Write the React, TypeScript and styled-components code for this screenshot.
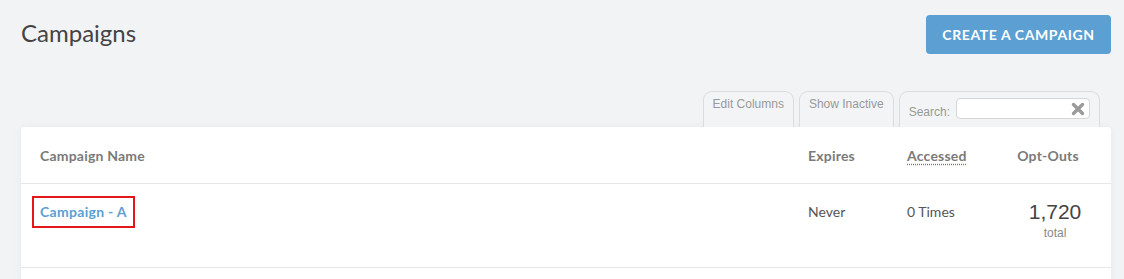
import React from "react";
import styled, { createGlobalStyle } from "styled-components";

const GlobalStyle = createGlobalStyle`
  html, body {
    margin: 0;
    padding: 0;
    background-color: #f2f3f5;
  }
  body {
    font-family: Lato, "Noto Sans", sans-serif;
    color: #555555;
  }
`;

const Page = styled.div`
  padding: 15px 13px 0 21px;
  min-height: 279px;
  box-sizing: border-box;
  overflow: hidden;
`;

const TopBar = styled.div`
  display: flex;
  justify-content: space-between;
  align-items: flex-start;
`;

const Title = styled.h1`
  margin: 0;
  padding-top: 3px;
  font-size: 24px;
  font-weight: 400;
  line-height: 30px;
  color: #444444;
`;

const PrimaryButton = styled.button`
  width: 185px;
  height: 39px;
  border: none;
  border-radius: 4px;
  background-color: #5b9fd3;
  color: #ffffff;
  font-family: Lato, "Noto Sans", sans-serif;
  font-size: 14px;
  font-weight: 700;
  letter-spacing: 0.6px;
  cursor: pointer;
`;

const Toolbar = styled.div`
  display: flex;
  justify-content: flex-end;
  gap: 5px;
  margin-top: 37px;
  padding-right: 11px;
`;

const Tab = styled.div<{ wide?: boolean }>`
  height: 36px;
  box-sizing: border-box;
  display: flex;
  align-items: flex-start;
  gap: 6px;
  padding: ${(p) => (p.wide ? "6px 9px 0 9px" : "5px 9px 0 9px")};
  border: 1px solid #dcdcdc;
  border-bottom: none;
  border-radius: 9px 9px 0 0;
  background-color: #f3f4f6;
  font-family: "Liberation Sans", Arial, sans-serif;
  font-size: 12px;
  color: #999999;
  cursor: pointer;
`;

const SearchLabel = styled.label`
  margin-top: 7px;
`;

const SearchBox = styled.div`
  position: relative;
  width: 134px;
  height: 21px;
  box-sizing: border-box;
  border: 1px solid #d6d6d6;
  border-radius: 4px;
  background-color: #ffffff;
`;

const ClearIcon = styled.svg`
  position: absolute;
  right: 4px;
  top: 3px;
`;

const Card = styled.div`
  background-color: #ffffff;
  border-radius: 4px;
  box-shadow: 0 0 8px rgba(0, 0, 0, 0.05);
  min-height: 160px;
`;

const Row = styled.div<{ head?: boolean }>`
  display: grid;
  grid-template-columns: 1fr 98px 95px 100px;
  align-items: ${(p) => (p.head ? "center" : "start")};
  height: ${(p) => (p.head ? "57px" : "84px")};
  box-sizing: border-box;
  padding: ${(p) => (p.head ? "0 11px 0 19px" : "12px 11px 0 11px")};
  border-bottom: 1px solid #e6e6e6;
`;

const HeadCell = styled.div<{ center?: boolean; shift?: number }>`
  font-size: 14px;
  font-weight: 700;
  letter-spacing: 0.2px;
  color: #7a7a7a;
  text-align: ${(p) => (p.center ? "center" : "left")};
  padding-left: ${(p) => p.shift ?? 0}px;
  padding-right: ${(p) => (p.center ? 4 : 0)}px;
`;

const Abbr = styled.abbr`
  text-decoration: underline dotted #777777;
  text-underline-offset: 3px;
  cursor: help;
`;

const Cell = styled.div<{ shift?: number }>`
  padding-top: 6px;
  padding-left: ${(p) => p.shift ?? 0}px;
  font-size: 14px;
  line-height: 20px;
  color: #555555;
`;

const NameLink = styled.a`
  display: inline-block;
  padding: 4px 6px;
  border: 2px solid #e4161b;
  font-size: 14px;
  font-weight: 700;
  letter-spacing: 0.3px;
  line-height: 20px;
  color: #5b9fd3;
  text-decoration: none;
`;

const Total = styled.div`
  display: flex;
  flex-direction: column;
  align-items: center;
  padding: 5px 0 0 10px;
  font-family: "Liberation Sans", Arial, sans-serif;
`;

const TotalValue = styled.span`
  font-size: 21px;
  line-height: 22px;
  color: #444444;
`;

const TotalLabel = styled.span`
  margin-top: 3px;
  font-size: 12px;
  line-height: 14px;
  color: #888888;
`;

const campaigns = [
  { name: "Campaign - A", expires: "Never", accessed: "0 Times", optOuts: "1,720" },
];

export default function App() {
  return (
    <>
      <GlobalStyle />
      <Page>
        <TopBar>
          <Title>Campaigns</Title>
          <PrimaryButton>CREATE A CAMPAIGN</PrimaryButton>
        </TopBar>
        <Toolbar>
          <Tab>Edit Columns</Tab>
          <Tab>Show Inactive</Tab>
          <Tab wide>
            <SearchLabel>Search:</SearchLabel>
            <SearchBox>
              <ClearIcon width="14" height="14" viewBox="0 0 14 14">
                <path
                  d="M2.5 2.5 L11.5 11.5 M11.5 2.5 L2.5 11.5"
                  stroke="#9a9a9a"
                  strokeWidth="3.4"
                  strokeLinecap="round"
                />
              </ClearIcon>
            </SearchBox>
          </Tab>
        </Toolbar>
        <Card>
          <Row head>
            <HeadCell>Campaign Name</HeadCell>
            <HeadCell shift={1}>Expires</HeadCell>
            <HeadCell shift={2}>
              <Abbr title="Last accessed">Accessed</Abbr>
            </HeadCell>
            <HeadCell center>Opt-Outs</HeadCell>
          </Row>
          {campaigns.map((c) => (
            <Row key={c.name}>
              <div>
                <NameLink href="#">{c.name}</NameLink>
              </div>
              <Cell shift={1}>{c.expires}</Cell>
              <Cell shift={2}>{c.accessed}</Cell>
              <Total>
                <TotalValue>{c.optOuts}</TotalValue>
                <TotalLabel>total</TotalLabel>
              </Total>
            </Row>
          ))}
        </Card>
      </Page>
    </>
  );
}
